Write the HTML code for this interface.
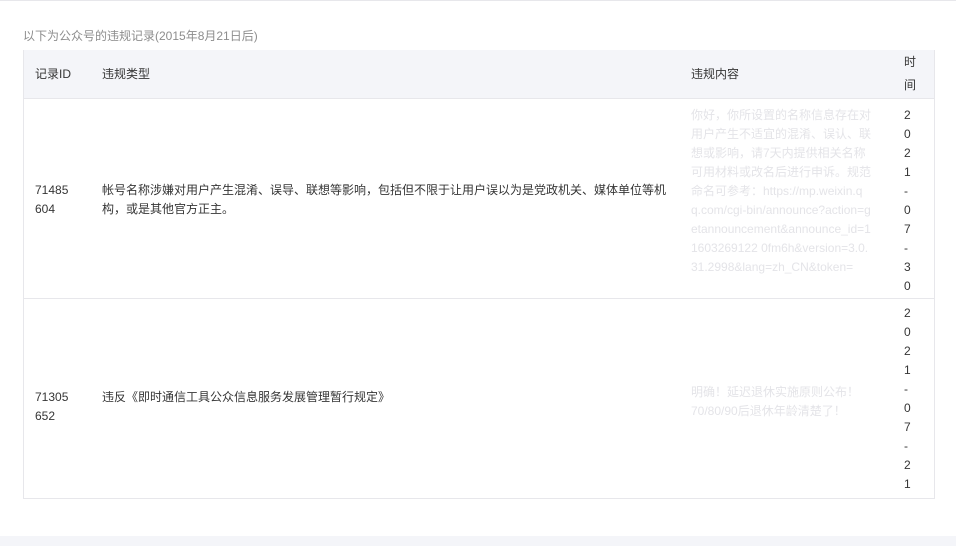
<!DOCTYPE html>
<html><head><meta charset="utf-8"><style>
body{margin:0;width:956px;height:546px;background:#fff;font-family:"Liberation Sans","Noto Sans CJK SC",sans-serif;font-size:12px;color:#353535;position:relative;overflow:hidden}
.top{position:absolute;left:0;top:0;width:956px;height:1px;background:#e7e7eb}
.cap{position:absolute;left:23px;top:27px;color:#8d8d8d;font-size:12px}
.tbl{position:absolute;left:23px;top:50px;width:910px;height:448px;border:1px solid #e7e7eb;border-top:none}
.hd{position:absolute;left:0;top:0;width:910px;height:48px;background:#f4f5f9;border-bottom:1px solid #e7e7eb}
.t{position:absolute;line-height:19px}
.sep{position:absolute;left:0;top:248px;width:910px;height:1px;background:#e7e7eb}
.foot{position:absolute;left:0;top:536px;width:956px;height:10px;background:#f4f5f9}
.faint{color:#e4e4e8}
.vert{width:8px;word-break:break-all}
</style></head><body>
<div class="top"></div>
<div class="cap">以下为公众号的违规记录(2015年8月21日后)</div>
<div class="tbl">
<div class="hd"></div>
<div class="t" style="left:11px;top:15px">记录ID</div>
<div class="t" style="left:78px;top:15px">违规类型</div>
<div class="t" style="left:667px;top:15px">违规内容</div>
<div class="t" style="left:880px;top:1px;line-height:23px;width:14px">时间</div>
<div class="t" style="left:11px;top:131px;width:40px">71485 604</div>
<div class="t" style="left:78px;top:131px;width:570px">帐号名称涉嫌对用户产生混淆、误导、联想等影响，包括但不限于让用户误以为是党政机关、媒体单位等机构，或是其他官方正主。</div>
<div class="t faint" style="left:667px;top:56px;width:180px;word-break:break-all">你好，你所设置的名称信息存在对用户产生不适宜的混淆、误认、联想或影响，请7天内提供相关名称可用材料或改名后进行申诉。规范命名可参考：https://mp.weixin.qq.com/cgi-bin/announce?action=getannouncement&amp;announce_id=11603269122 0fm6h&amp;version=3.0.31.2998&amp;lang=zh_CN&amp;token=</div>
<div class="t vert" style="left:880px;top:56px">2021-07-30</div>
<div class="sep"></div>
<div class="t" style="left:11px;top:338px;width:40px">71305 652</div>
<div class="t" style="left:78px;top:338px">违反《即时通信工具公众信息服务发展管理暂行规定》</div>
<div class="t faint" style="left:667px;top:333px;width:180px">明确！延迟退休实施原则公布！70/80/90后退休年龄清楚了！</div>
<div class="t vert" style="left:880px;top:254px">2021-07-21</div>
</div>
<div class="foot"></div>
</body></html>
